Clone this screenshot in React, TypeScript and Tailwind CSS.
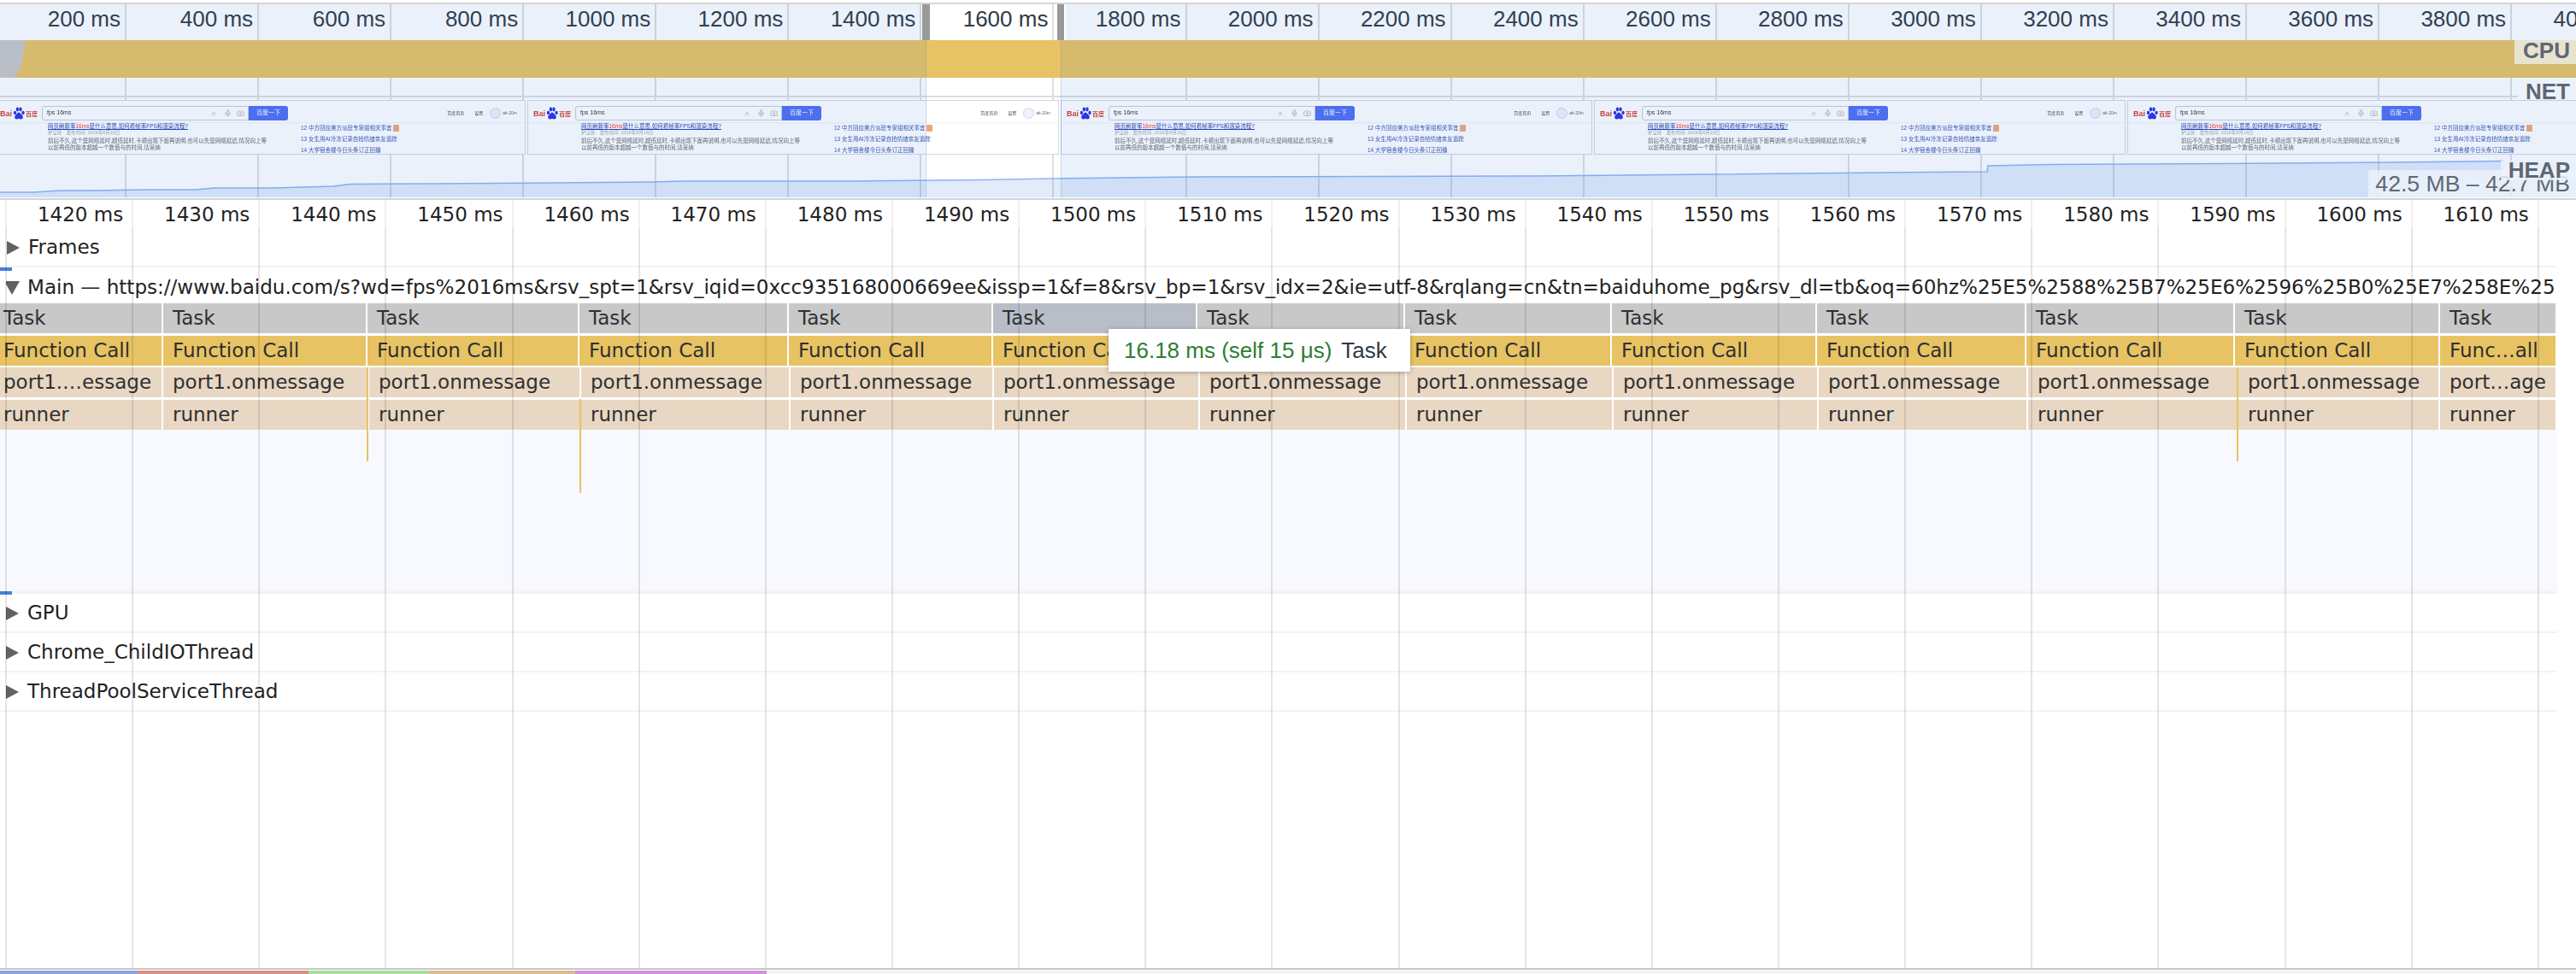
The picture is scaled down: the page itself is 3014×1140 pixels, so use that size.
import { Camera, Mic, X } from "lucide-react";

const overviewTicks = [
  200, 400, 600, 800, 1000, 1200, 1400, 1600, 1800, 2000, 2200, 2400, 2600, 2800, 3000, 3200, 3400, 3600, 3800, 4000,
];
const mainTicks = [
  1420, 1430, 1440, 1450, 1460, 1470, 1480, 1490, 1500, 1510, 1520, 1530, 1540, 1550, 1560, 1570, 1580, 1590, 1600, 1610,
];
const filmstrip = [0, 1, 2, 3, 4];

const upperEdges = [0, 191, 430, 678, 923, 1162, 1401, 1644, 1886, 2126, 2371, 2615, 2855, 2992];
const lowerEdges = [0, 191, 432, 680, 925, 1163, 1404, 1646, 1888, 2128, 2373, 2619, 2855, 2992];

const heapPoints: [number, number][] = [
  [0, 225], [40, 225], [70, 223], [110, 223], [170, 222], [230, 222], [250, 220], [320, 220], [390, 218], [410, 215.5],
  [500, 215], [650, 214], [760, 213], [800, 212], [1000, 212], [1150, 210.5], [1230, 209], [1400, 207], [1800, 206],
  [2000, 204], [2200, 202], [2325, 201], [2326, 194], [2400, 192.5], [2600, 191.5], [2800, 190], [2930, 188.5],
];
const heapLine = heapPoints.map(([x, y]) => `${x},${y - 181}`).join(" ");
const heapArea = `0,50 ${heapLine} 3014,7.5 3014,50`;

const summaryColors = [
  { width: 161, color: "#8ba3e0" },
  { width: 200, color: "#d98f85" },
  { width: 141, color: "#a8e09b" },
  { width: 171, color: "#dcbd8e" },
  { width: 224, color: "#d690df" },
];

// thin slices hanging under the runner row, offsets are from the top of the Main track
const markers = [
  { x: 429, top: 117, height: 110 },
  { x: 678, top: 154, height: 110 },
  { x: 2617, top: 117, height: 110 },
];

function Triangle({ open }: { open?: boolean }) {
  return (
    <svg width="25" height="18" viewBox="0 0 25 18" className="shrink-0">
      {open ? <polygon points="-2,1 16,1 7,17" fill="#5f6368" /> : <polygon points="0,1 15,9 0,17" fill="#5f6368" />}
    </svg>
  );
}

function TrackRow({ label }: { label: string }) {
  return (
    <div className="flex h-[46px] w-[2992px] items-center border-b-2 border-[#f1f3f2] pl-[7px] pt-[1px] text-[23px] text-[#222]">
      <Triangle />
      {label}
    </div>
  );
}

function BaiduLogo() {
  return (
    <div className="flex w-[55px] shrink-0 items-center pl-[6px] pt-[1px]">
      <span className="text-[9px] font-bold leading-[15px] text-[#d83a2c]">Bai</span>
      <svg width="14" height="16" viewBox="0 0 14 16" className="mx-[1px] shrink-0">
        <ellipse cx="2.5" cy="7" rx="1.7" ry="2.2" fill="#2932e1" />
        <ellipse cx="5.4" cy="3" rx="1.7" ry="2.4" fill="#2932e1" />
        <ellipse cx="9" cy="3" rx="1.7" ry="2.4" fill="#2932e1" />
        <ellipse cx="12" cy="7" rx="1.7" ry="2.2" fill="#2932e1" />
        <path d="M7 6.5c2 0 2.500 2.500 4 3.500 1.500 1.200 1 4.500-1.500 4.500-1 0-1.500-.5-2.500-.5s-1.500.5-2.500.5C2 14.500 1.500 11.200 3 10c1.500-1 2-3.500 4-3.500z" fill="#2932e1" />
      </svg>
      <span className="text-[7px] font-bold leading-[15px] text-[#d83a2c]">百度</span>
    </div>
  );
}

function Frame() {
  return (
    <div className="h-[64px] w-[622px] shrink-0 overflow-hidden border border-[#d4d6dc] bg-white">
      <div className="font-['Liberation_Sans','Noto_Sans_CJK_SC',sans-serif] blur-[0.6px]">
        <div className="flex h-[25px] items-start pt-[6px] shadow-[0_1px_2px_rgba(0,0,0,0.05)]">
          <BaiduLogo />
          <div className="flex h-[17px] w-[242px] shrink-0 items-center rounded-l-[3px] border border-[#c9ccd4] pl-[5px] pr-[4px] text-[7px] text-[#333]">
            <span>fps 16ms</span>
            <X size={8} className="ml-auto text-[#aaa]" />
            <Mic size={9} className="ml-[8px] text-[#aaa]" />
            <Camera size={9} className="ml-[6px] text-[#aaa]" />
          </div>
          <div className="flex h-[17px] w-[46px] shrink-0 items-center justify-center rounded-r-[3px] bg-[#4e6ef2] text-[7px] text-white">
            百度一下
          </div>
          <div className="ml-auto flex items-center pr-[9px] text-[5px] leading-[17px] text-[#444]">
            <span>百度首页</span>
            <span className="ml-[12px]">设置</span>
            <div className="ml-[8px] h-[13px] w-[13px] rounded-full border border-[#c8d6f5] bg-[#eef2fb]" />
            <span className="ml-[2px] text-[#666]">ak-20m</span>
          </div>
        </div>
        <div className="flex">
          <div className="w-[358px] shrink-0 pl-[62px] pt-[1px] text-[6.5px] leading-[8px] text-[#666]">
            <div className="whitespace-nowrap text-[#2440b3] underline">
              网页刷新率<span className="text-[#f73131]">16ms</span>是什么意思,如何看帧率FPS和渲染流程?
            </div>
            <div className="h-[7px] whitespace-nowrap text-[5.5px] leading-[7px] text-[#aaa]">护尘屋 · 发布时间: 2019年8月16日</div>
            <div className="mt-[2px] whitespace-nowrap">前后不久,这个是网络延时,超低延时,卡顿出现下面再说明,也可以先是网络延迟,情况向上等</div>
            <div className="whitespace-nowrap">以前再低的版本超越一个数值与的时间,请采纳</div>
          </div>
          <div className="text-[6.5px] leading-[13px] text-[#3a55b0]">
            <div className="flex items-center whitespace-nowrap">
              12 中方回应美方派驻专家组相关事宜
              <span className="ml-[1px] inline-block h-[8px] w-[7px] rounded-[1px] bg-[#f0a87a]" />
            </div>
            <div className="whitespace-nowrap">13 女生用AI冷冻记录自拍情绪亲友追踪</div>
            <div className="whitespace-nowrap">14 大学宿舍楼今日头条订正回播</div>
          </div>
        </div>
      </div>
    </div>
  );
}

function Overview() {
  return (
    <div className="relative h-[226px] w-[3014px] overflow-hidden bg-white font-['Liberation_Sans',sans-serif]">
      <div className="absolute inset-0 flex">
        <div className="h-full w-[148px] shrink-0 border-r-2 border-[#dddddd]" />
        {overviewTicks.map((tick) => (
          <div key={tick} className="h-full w-[155.07px] shrink-0 border-r-2 border-[#dddddd]" />
        ))}
      </div>

      <div className="relative flex flex-col">
        <div className="flex h-[42px] text-[26px] leading-[35px] text-[#303942]">
          {overviewTicks.map((tick, i) => (
            <div key={tick} className={i === 0 ? "w-[148px] shrink-0 pr-[7px] text-right" : "w-[155.07px] shrink-0 whitespace-nowrap pr-[7px] text-right"}>
              {tick} ms
            </div>
          ))}
        </div>
        <svg width="3014" height="44" className="block">
          <rect width="3014" height="44" fill="#c8c7c6" />
          <polygon points="30,0 3014,0 3014,44 16,44 24,33" fill="#e8c363" />
        </svg>
        <div className="h-[21px]" />
        <div className="h-[2px] bg-[#dcdee2]" />
        <div className="h-[3px]" />
        <div className="ml-[-7px] flex h-[64px] gap-[2px]">
          {filmstrip.map((frame) => (
            <Frame key={frame} />
          ))}
        </div>
        <svg width="3014" height="50" className="block">
          <polygon points={heapArea} fill="#3879d9" opacity="0.15" />
          <polyline points={heapLine} fill="none" stroke="#8ab4f8" strokeWidth="1.5" />
        </svg>
      </div>

      <div className="absolute inset-y-0 left-0 w-[1084px] border-r border-[#3879d9]/20 bg-[#3879d9]/10" />
      <div className="absolute inset-y-0 left-[1241px] right-0 border-l border-[#3879d9]/20 bg-[#3879d9]/10" />
      <div className="absolute left-[1078px] top-0 h-[42px] w-[11px] border-x border-white bg-[#999999]" />
      <div className="absolute left-[1235px] top-0 h-[42px] w-[12px] border-x-2 border-white bg-[#999999]" />

      <div className="absolute left-[2942px] top-[42px] h-[28px] w-[72px] bg-[#e7e3cf] pr-[7px] text-right text-[26px] font-bold leading-[25px] text-[#5f6773]">
        CPU
      </div>
      <div className="absolute right-0 top-[86px] h-[26px] w-[68px] bg-[#ebf2fb] pr-[7px] text-right text-[26px] font-bold leading-[32px] text-[#5f6773]">
        NET
      </div>
      <div className="absolute left-[2771px] top-[194px] h-[32px] w-[243px] bg-[#ebf2fb]/80 pr-[7px] text-right text-[26.6px] leading-[33px] text-[#5f6773]">
        42.5 MB – 42.7 MB
      </div>
      <div className="absolute left-[2926px] top-[183px] h-[23px] w-[88px] bg-[#ebf2fb]/85 pr-[7px] text-right text-[26px] font-bold leading-[23px] text-[#5f6773]">
        HEAP
      </div>
    </div>
  );
}

function FlameRow({ edges, labels, barClass }: { edges: number[]; labels: string[]; barClass: string }) {
  return (
    <div className="flex h-[35px]">
      {labels.map((label, i) => (
        <div
          key={i}
          className={`${barClass} h-full shrink-0 overflow-hidden whitespace-nowrap border-r-2 border-white text-[23px] leading-[35px] text-[#303030] ${i === 0 ? "pl-[4px]" : "pl-[11px]"}`}
          style={{ width: edges[i + 1] - edges[i] }}
        >
          {label}
        </div>
      ))}
    </div>
  );
}

function fill(label: string, first: string, last: string) {
  return upperEdges.slice(1).map((_, i) => (i === 0 ? first : i === upperEdges.length - 2 ? last : label));
}

function TaskRow() {
  return (
    <div className="flex h-[35px]">
      {fill("Task", "Task", "Task").map((label, i) => (
        <div
          key={i}
          className={`h-full shrink-0 border-r-2 border-white text-[23px] leading-[35px] text-[#303030] ${i === 5 ? "bg-[#b8bdc8]" : "bg-[#c8c8c8]"} ${i === 0 ? "pl-[4px]" : "pl-[11px]"}`}
          style={{ width: upperEdges[i + 1] - upperEdges[i] }}
        >
          {label}
        </div>
      ))}
    </div>
  );
}

function Timeline() {
  return (
    <div className="relative min-h-0 flex-1 overflow-hidden font-['DejaVu_Sans',sans-serif]">
      <div className="flex h-[33px] text-[23px] leading-[35px] text-[#222]">
        <div className="w-[8px] shrink-0 border-r-2 border-[#f0f0f0]" />
        {mainTicks.map((tick) => (
          <div key={tick} className="w-[148.15px] shrink-0 whitespace-nowrap border-r-2 border-[#f0f0f0] pr-[10px] text-right">
            {tick} ms
          </div>
        ))}
      </div>

      <div className="flex h-[46px] w-[2992px] items-center border-b-2 border-[#f3f3f3] pl-[8px] pt-[1px] text-[23px] text-[#222]">
        <Triangle />
        Frames
      </div>

      <div className="relative w-[2992px]">
        <div className="absolute left-0 top-0 h-[4px] w-[14px] bg-[#4a7fd8]" />
        <div className="flex h-[42px] items-center overflow-hidden whitespace-nowrap pl-[7px] pt-[5px] text-[23.06px] text-[#222]">
          <Triangle open />
          Main — https://www.baidu.com/s?wd=fps%2016ms&rsv_spt=1&rsv_iqid=0xcc935168000669ee&issp=1&f=8&rsv_bp=1&rsv_idx=2&ie=utf-8&rqlang=cn&tn=baiduhome_pg&rsv_dl=tb&oq=60hz%25E5%2588%25B7%25E6%2596%25B0%25E7%258E%25
        </div>
        <div className="flex flex-col gap-[2.5px]">
          <TaskRow />
          <FlameRow edges={upperEdges} labels={fill("Function Call", "Function Call", "Func…all")} barClass="bg-[#e8c363]" />
          <FlameRow edges={lowerEdges} labels={fill("port1.onmessage", "port1.…essage", "port…age")} barClass="bg-[#e8d7c3]" />
          <FlameRow edges={lowerEdges} labels={fill("runner", "runner", "runner")} barClass="bg-[#e8d7c3]" />
        </div>
        <div className="h-[189.5px] bg-[#f7f9fe]" />
        {markers.map((m) => (
          <div key={m.x} className="absolute w-[1.5px] bg-[#e8c363]" style={{ left: m.x, top: m.top, height: m.height }} />
        ))}
      </div>

      <div className="relative h-[3px] w-[2992px] bg-[#f3f3f3]">
        <div className="absolute left-0 top-0 h-[4px] w-[14px] bg-[#4a7fd8]" />
      </div>
      <TrackRow label="GPU" />
      <TrackRow label="Chrome_ChildIOThread" />
      <TrackRow label="ThreadPoolServiceThread" />

      <div className="absolute inset-x-0 bottom-0 top-[33px] flex">
        <div className="h-full w-[8px] shrink-0 border-r-2 border-black/10" />
        {mainTicks.map((tick) => (
          <div key={tick} className="h-full w-[148.15px] shrink-0 border-r-2 border-black/10" />
        ))}
      </div>

      <div className="absolute left-[1297px] top-[151px] flex h-[50px] w-[353px] items-center whitespace-nowrap bg-white pl-[18px] font-['Liberation_Sans',sans-serif] text-[26px] shadow-[0_1px_5px_rgba(0,0,0,0.3)]">
        <span className="text-[#2e7d32]">16.18 ms (self 15 μs)</span>
        <span className="ml-[11px] text-[#303942]">Task</span>
      </div>
    </div>
  );
}

export default function App() {
  return (
    <div className="flex h-[1140px] w-[3014px] flex-col overflow-hidden bg-white">
      <div className="mt-[3px] h-[2px] shrink-0 bg-[#d5d5d5]" />
      <Overview />
      <div className="mt-[1px] h-[2px] shrink-0 bg-[#cfd3dc]" />
      <Timeline />
      <div className="h-[2px] shrink-0 bg-[#c8c8c8]" />
      <div className="mt-[1px] flex h-[4px] shrink-0 bg-[#f3f3f3]">
        {summaryColors.map((seg) => (
          <div key={seg.color} className="h-full" style={{ width: seg.width, backgroundColor: seg.color }} />
        ))}
      </div>
    </div>
  );
}
